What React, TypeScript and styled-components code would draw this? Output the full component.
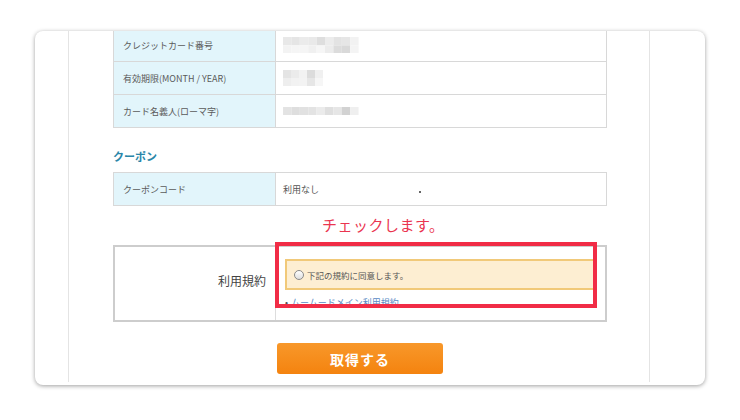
import React from "react";
import styled, { createGlobalStyle } from "styled-components";

const GlobalStyle = createGlobalStyle`
  html, body {
    margin: 0;
    padding: 0;
    background: #ffffff;
  }
  body {
    font-family: "Noto Sans CJK JP", "Noto Sans", sans-serif;
    color: #555555;
  }
`;

// モザイク（ぼかし済みの値）
const cardNumberCells = [
  ["#e8e8e8", "#e5e5e5", "#ebebeb", "#e9e9e9", "#dedede", "#ececec", "#e3e3e3", "#e6e6e6", "#f2f2f2"],
  ["#f3f3f3", "#f5f5f5", "#f5f5f5", "#f0f0f0", "#f6f6f6", "#ececec", "#dcdcdc", "#d9d9d9", "#f4f4f4"],
];
const expiryCells = [
  ["#e4e4e4", "#ebebeb", "#f2f2f2", "#dcdcdc", "#f0f0f0"],
  ["#eeeeee", "#f2f2f2", "#f3f3f3", "#e6e6e6", "#f6f6f6"],
];
const holderCells = [
  ["#e3e3e3", "#dedede", "#e1e1e1", "#e3e3e3", "#ebebeb", "#dfdfdf", "#e6e6e6", "#d2d2d2", "#efefef"],
];

const Mosaic = ({ cells, size }: { cells: string[][]; size: number }) => {
  const w = cells[0].length * size;
  const h = cells.length * size;
  return (
    <svg width={w} height={h} viewBox={`0 0 ${w} ${h}`}>
      {cells.map((row, r) =>
        row.map((c, i) => (
          <rect key={`${r}-${i}`} x={i * size} y={r * size} width={size} height={size} fill={c} />
        ))
      )}
    </svg>
  );
};

export default function App() {
  return (
    <>
      <GlobalStyle />
      <Stage>
        <Frame>
          <Column>
            <Content>
              <DataTable>
                <Row>
                  <Label>クレジットカード番号</Label>
                  <Value>
                    <Mosaic cells={cardNumberCells} size={8.4} />
                  </Value>
                </Row>
                <Row>
                  <Label>有効期限(MONTH / YEAR)</Label>
                  <Value>
                    <Mosaic cells={expiryCells} size={8} />
                  </Value>
                </Row>
                <Row>
                  <Label>カード名義人(ローマ字)</Label>
                  <Value>
                    <Mosaic cells={holderCells} size={8.4} />
                  </Value>
                </Row>
              </DataTable>

              <SectionTitle>クーポン</SectionTitle>
              <DataTable>
                <Row>
                  <Label>クーポンコード</Label>
                  <Value>
                    利用なし
                    <Speck />
                  </Value>
                </Row>
              </DataTable>

              <Annotation>チェックします。</Annotation>

              <TermsTable>
                <TermsLabel>利用規約</TermsLabel>
                <TermsBody>
                  <AgreeBox>
                    <Radio />
                    下記の規約に同意します。
                  </AgreeBox>
                  <LinkLine>
                    <Bullet>•</Bullet>
                    <TermsLink>ムームードメイン利用規約</TermsLink>
                  </LinkLine>
                </TermsBody>
                <Highlight />
              </TermsTable>

              <SubmitButton>取得する</SubmitButton>
            </Content>
          </Column>
        </Frame>
      </Stage>
    </>
  );
}

const Stage = styled.div`
  width: 740px;
  height: 420px;
  box-sizing: border-box;
  padding: 31px 35px 0;
`;

const Frame = styled.div`
  width: 670px;
  height: 354px;
  background: #ffffff;
  border-radius: 8px;
  overflow: hidden;
  box-shadow: 0 1px 4px rgba(0, 0, 0, 0.38);
`;

const Column = styled.div`
  width: 582px;
  height: 100%;
  margin-left: 33px;
  box-sizing: border-box;
  border-left: 1px solid #e4e4e4;
  border-right: 1px solid #e4e4e4;
  padding: 0 42px 0 44px;
`;

const Content = styled.div`
  margin-top: -3px;
  display: flex;
  flex-direction: column;
`;

const DataTable = styled.div`
  border: 1px solid #d8d8d8;
`;

const Row = styled.div`
  display: grid;
  grid-template-columns: 162px 1fr;
  height: 32px;

  & + & {
    border-top: 1px solid #d8d8d8;
  }
`;

const Label = styled.div`
  display: flex;
  align-items: center;
  padding-left: 9px;
  background: #e2f5fb;
  border-right: 1px solid #d8d8d8;
  font-size: 9px;
  color: #5a5a5a;
`;

const Value = styled.div`
  display: flex;
  align-items: center;
  padding-left: 7px;
  font-size: 9px;
  color: #555555;
`;

const Speck = styled.span`
  width: 2px;
  height: 2px;
  margin-left: 100px;
  margin-top: 6px;
  background: #333333;
  border-radius: 1px;
`;

const SectionTitle = styled.div`
  margin: 20px 0 8px;
  font-size: 11px;
  line-height: 16px;
  font-weight: 700;
  color: #2a86a8;
`;

const Annotation = styled.div`
  margin: 9px 0 10px 209px;
  font-size: 15px;
  line-height: 20px;
  letter-spacing: 0.5px;
  color: #ea3550;
`;

const TermsTable = styled.div`
  position: relative;
  display: grid;
  grid-template-columns: 161px 1fr;
  height: 77px;
  box-sizing: border-box;
  border: 2px solid #cdcdcd;
`;

const TermsLabel = styled.div`
  display: flex;
  align-items: center;
  justify-content: flex-end;
  padding: 0 9px 6px 0;
  border-right: 1px solid #dddddd;
  font-size: 12px;
  color: #444444;
`;

const TermsBody = styled.div`
  padding: 12px 8px 0 9px;
`;

const AgreeBox = styled.div`
  display: flex;
  align-items: center;
  gap: 3px;
  height: 31px;
  box-sizing: border-box;
  padding-left: 7px;
  background: #fdeed2;
  border: 2px solid #f1c979;
  font-size: 8.5px;
  color: #555555;
`;

const Radio = styled.span`
  width: 8px;
  height: 8px;
  border-radius: 50%;
  border: 1px solid #8a8a8a;
  background: linear-gradient(#ffffff, #dedede);
`;

// 赤枠の下で切れているリンク行
const LinkLine = styled.div`
  display: flex;
  gap: 3px;
  margin-top: 7px;
  height: 9px;
  overflow: hidden;
  font-size: 9px;
  line-height: 12px;
`;

const Bullet = styled.span`
  color: #555555;
`;

const TermsLink = styled.span`
  color: #5a8ac4;
  text-decoration: underline;
`;

const Highlight = styled.div`
  position: absolute;
  left: 160px;
  top: -5px;
  width: 322px;
  height: 66px;
  box-sizing: border-box;
  border: 4px solid #f12c46;
`;

const SubmitButton = styled.button`
  align-self: center;
  width: 166px;
  height: 31px;
  margin-top: 21px;
  border: none;
  border-radius: 3px;
  background: linear-gradient(#f8982a, #f4830f);
  color: #ffffff;
  font-family: inherit;
  font-size: 14px;
  font-weight: 700;
  letter-spacing: 1px;
`;
